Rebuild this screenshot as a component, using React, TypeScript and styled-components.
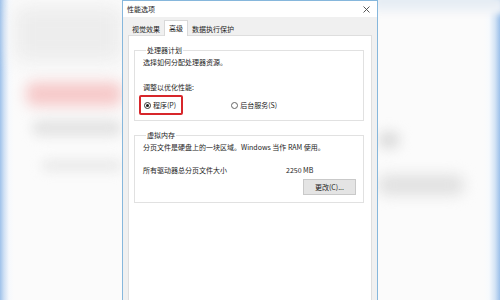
import React from "react";
import styled, { createGlobalStyle } from "styled-components";

const Global = createGlobalStyle`
  html, body { margin: 0; padding: 0; background: #fff; }
  body { font-family: "Noto Sans CJK SC", "Noto Sans", sans-serif; }
`;

const Page = styled.div`
  width: 500px;
  height: 300px;
  display: flex;
  overflow: hidden;
  background: #fff;
`;

const Backdrop = styled.div<{ $side: "left" | "right" }>`
  width: 122px;
  height: 300px;
  display: flex;
  flex-direction: column;
  align-items: ${(p) => (p.$side === "left" ? "flex-end" : "flex-start")};
  background: ${(p) =>
    p.$side === "left"
      ? "linear-gradient(to right, #9fc2ea 0px, #cfe0f4 4px, #f6f9fd 9px, #fbfbfb 14px)"
      : "linear-gradient(to left, #9cc0ea 0px, #d3e3f5 5px, #f7fafd 11px, #fbfbfb 16px)"};
  overflow: hidden;
`;

const TopHaze = styled.div`
  align-self: stretch;
  height: 18px;
  background: linear-gradient(to bottom, #dfe8f1, #f4f6f9);
  filter: blur(3px);
  margin: -4px -4px 0 -4px;
`;

const Blob = styled.div<{ $w: number; $h: number; $mt: number; $c: string; $b?: number }>`
  width: ${(p) => p.$w}px;
  height: ${(p) => p.$h}px;
  margin-top: ${(p) => p.$mt}px;
  background: ${(p) => p.$c};
  border-radius: 8px;
  filter: blur(${(p) => p.$b ?? 6}px);
  flex-shrink: 0;
`;

const Dialog = styled.div`
  width: 256px;
  height: 301px;
  box-sizing: border-box;
  border: 1px solid #86b7dc;
  border-bottom: none;
  display: flex;
  flex-direction: column;
  background: #fff;
  color: #1c1c1c;
  font-size: 7px;
  line-height: 10px;
`;

const TitleBar = styled.div`
  height: 16px;
  display: flex;
  align-items: center;
  justify-content: space-between;
  padding: 0 7px 0 4px;
  background: #fff;
`;

const Title = styled.span`
  font-size: 7px;
  color: #222;
`;

const Body = styled.div`
  flex: 1;
  background: #f0f0f0;
  padding: 0 5px;
  display: flex;
  flex-direction: column;
`;

const TabStrip = styled.div`
  height: 18px;
  display: flex;
  align-items: flex-end;
`;

const Tab = styled.div<{ $active?: boolean }>`
  height: ${(p) => (p.$active ? 16 : 14)}px;
  display: flex;
  align-items: center;
  padding: ${(p) => (p.$active ? "0 4px 2px" : "0 3px 0")};
  box-sizing: border-box;
  background: ${(p) => (p.$active ? "#fff" : "transparent")};
  border: 1px solid ${(p) => (p.$active ? "#d9d9d9" : "transparent")};
  border-bottom: none;
  position: relative;
  z-index: 1;
  margin-bottom: ${(p) => (p.$active ? -1 : 0)}px;
  white-space: nowrap;
`;

const Panel = styled.div`
  flex: 1;
  background: #fff;
  border: 1px solid #dedede;
  border-bottom: none;
  padding: 9px 7px 0 5px;
  display: flex;
  flex-direction: column;
  gap: 9px;
`;

const Group = styled.fieldset<{ $pb: number }>`
  margin: 0;
  border: 1px solid #e1e1e1;
  padding: 1px 7px ${(p) => p.$pb}px 8px;
  min-width: 0;
  display: flex;
  flex-direction: column;
`;

const Legend = styled.legend`
  padding: 0 1px;
  margin-left: 3px;
  font-size: 7px;
  line-height: 10px;
`;

const Line = styled.div<{ $mt?: number }>`
  margin-top: ${(p) => p.$mt ?? 0}px;
  white-space: nowrap;
`;

const RadioRow = styled.div`
  display: flex;
  align-items: center;
  margin-top: 3px;
  margin-left: -4px;
`;

const Highlight = styled.div`
  height: 20px;
  box-sizing: border-box;
  border: 2px solid #d7262b;
  border-radius: 2px;
  display: flex;
  align-items: center;
  padding: 0 5px 0 3px;
`;

const Option = styled.label<{ $ml?: number }>`
  display: flex;
  align-items: center;
  gap: 2px;
  margin-left: ${(p) => p.$ml ?? 0}px;
  white-space: nowrap;
`;

const RadioDot = styled.span<{ $checked?: boolean }>`
  width: 7px;
  height: 7px;
  box-sizing: border-box;
  border-radius: 50%;
  border: 1px solid ${(p) => (p.$checked ? "#333" : "#666")};
  background: #fff;
  display: flex;
  align-items: center;
  justify-content: center;
  &::after {
    content: "";
    width: 3px;
    height: 3px;
    border-radius: 50%;
    background: ${(p) => (p.$checked ? "#1a1a1a" : "transparent")};
  }
`;

const SizeRow = styled.div`
  display: grid;
  grid-template-columns: 143px auto;
  margin-top: 13px;
  white-space: nowrap;
`;

const ButtonRow = styled.div`
  display: flex;
  justify-content: flex-end;
  margin-top: 4px;
`;

const Button = styled.button`
  width: 53px;
  height: 16px;
  box-sizing: border-box;
  border: 1px solid #c9c9c9;
  background: #e4e4e4;
  font-family: inherit;
  font-size: 7px;
  color: #222;
  padding: 0;
  display: flex;
  align-items: center;
  justify-content: center;
`;

const CloseIcon = () => (
  <svg width="7" height="7" viewBox="0 0 7 7">
    <path d="M0.5 0.5 L6.5 6.5 M6.5 0.5 L0.5 6.5" stroke="#444" strokeWidth="0.9" />
  </svg>
);

export default function App() {
  return (
    <Page>
      <Global />
      <Backdrop $side="left">
        <Blob $w={108} $h={56} $mt={6} $c="#ededed" $b={9} />
        <Blob $w={96} $h={24} $mt={20} $c="#f6c9c9" $b={7} />
        <Blob $w={90} $h={16} $mt={14} $c="#e3e3e3" $b={6} />
        <Blob $w={80} $h={11} $mt={24} $c="#e8e8e8" $b={6} />
      </Backdrop>
      <Dialog>
        <TitleBar>
          <Title>性能选项</Title>
          <CloseIcon />
        </TitleBar>
        <Body>
          <TabStrip>
            <Tab>视觉效果</Tab>
            <Tab $active>高级</Tab>
            <Tab>数据执行保护</Tab>
          </TabStrip>
          <Panel>
            <Group $pb={5}>
              <Legend>处理器计划</Legend>
              <Line $mt={1}>选择如何分配处理器资源。</Line>
              <Line $mt={15}>调整以优化性能:</Line>
              <RadioRow>
                <Highlight>
                  <Option>
                    <RadioDot $checked />
                    程序(P)
                  </Option>
                </Highlight>
                <Option $ml={48}>
                  <RadioDot />
                  后台服务(S)
                </Option>
              </RadioRow>
            </Group>
            <Group $pb={7}>
              <Legend>虚拟内存</Legend>
              <Line $mt={1}>分页文件是硬盘上的一块区域。Windows 当作 RAM 使用。</Line>
              <SizeRow>
                <span>所有驱动器总分页文件大小</span>
                <span>2250 MB</span>
              </SizeRow>
              <ButtonRow>
                <Button>更改(C)...</Button>
              </ButtonRow>
            </Group>
          </Panel>
        </Body>
      </Dialog>
      <Backdrop $side="right">
        <TopHaze />
        <Blob $w={22} $h={18} $mt={117} $c="#dedede" $b={6} />
        <Blob $w={86} $h={20} $mt={26} $c="#e0e0e0" $b={7} />
      </Backdrop>
    </Page>
  );
}
